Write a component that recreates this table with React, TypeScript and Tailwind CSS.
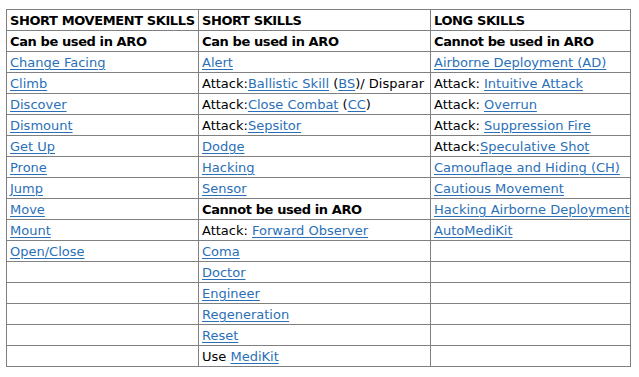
import React from "react"

type Part = string | { link: string } | { bold: string }

const L = (t: string): Part => ({ link: t })
const B = (t: string): Part => ({ bold: t })

const col1: Part[][] = [
  [B("SHORT MOVEMENT SKILLS")],
  [B("Can be used in ARO")],
  [L("Change Facing")],
  [L("Climb")],
  [L("Discover")],
  [L("Dismount")],
  [L("Get Up")],
  [L("Prone")],
  [L("Jump")],
  [L("Move")],
  [L("Mount")],
  [L("Open/Close")],
  [], [], [], [], [],
]

const col2: Part[][] = [
  [B("SHORT SKILLS")],
  [B("Can be used in ARO")],
  [L("Alert")],
  ["Attack:", L("Ballistic Skill"), " (", L("BS"), ")/ Disparar"],
  ["Attack:", L("Close Combat"), " (", L("CC"), ")"],
  ["Attack:", L("Sepsitor")],
  [L("Dodge")],
  [L("Hacking")],
  [L("Sensor")],
  [B("Cannot be used in ARO")],
  ["Attack: ", L("Forward Observer")],
  [L("Coma")],
  [L("Doctor")],
  [L("Engineer")],
  [L("Regeneration")],
  [L("Reset")],
  ["Use ", L("MediKit")],
]

const col3: Part[][] = [
  [B("LONG SKILLS")],
  [B("Cannot be used in ARO")],
  [L("Airborne Deployment (AD)")],
  ["Attack: ", L("Intuitive Attack")],
  ["Attack: ", L("Overrun")],
  ["Attack: ", L("Suppression Fire")],
  ["Attack:", L("Speculative Shot")],
  [L("Camouflage and Hiding (CH)")],
  [L("Cautious Movement")],
  [L("Hacking Airborne Deployment")],
  [L("AutoMediKit")],
  [], [], [], [], [], [],
]

function Cell({ parts }: { parts: Part[] }) {
  return (
    <td className="h-[21px] border border-[#808080] px-[3px] pt-[1px] pb-0 whitespace-nowrap overflow-hidden align-middle leading-[19px]">
      {parts.map((p, i) => {
        if (typeof p === "string") return <span key={i}>{p}</span>
        if ("link" in p)
          return (
            <a key={i} href="#" className="text-[#2a70b8] underline underline-offset-[2px]">
              {p.link}
            </a>
          )
        return (
          <span key={i} className="font-bold tracking-[-0.4px]">
            {p.bold}
          </span>
        )
      })}
    </td>
  )
}

export default function App() {
  return (
    <div className="w-[639px] h-[377px] bg-white pl-[6px] pt-[9px] font-['DejaVu_Sans','Verdana',sans-serif] text-[13px] text-black">
      <table className="table-fixed border-collapse border border-[#333] w-[624px]">
        <colgroup>
          <col className="w-[192px]" />
          <col className="w-[232px]" />
          <col className="w-[200px]" />
        </colgroup>
        <tbody>
          {col1.map((_, r) => (
            <tr key={r}>
              <Cell parts={col1[r]} />
              <Cell parts={col2[r]} />
              <Cell parts={col3[r]} />
            </tr>
          ))}
        </tbody>
      </table>
    </div>
  )
}
